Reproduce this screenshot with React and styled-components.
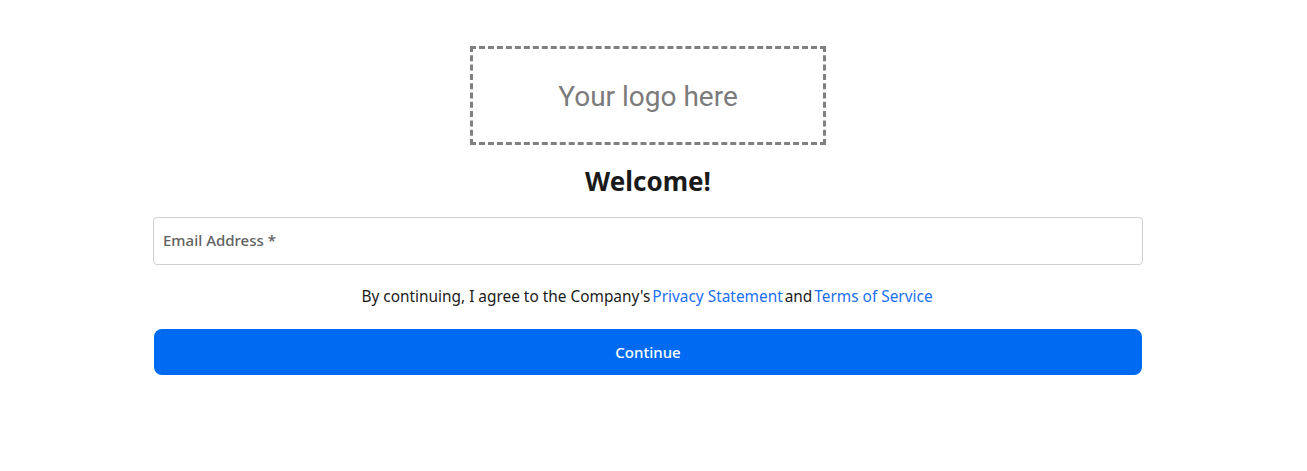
import React from 'react';
import styled, {createGlobalStyle} from 'styled-components';

const GlobalStyle = createGlobalStyle`
  body {
    margin: 0;
    background: #fff;
    font-family: 'Noto Sans', 'Open Sans', sans-serif;
    color: #1a1a1a;
  }
`;

const Page = styled.main`
  display: flex;
  justify-content: center;
  padding: 46px 11px 0 0;
`;

const Card = styled.div`
  width: 990px;
  display: flex;
  flex-direction: column;
  align-items: center;
`;

const LogoBox = styled.div`
  width: 350px;
  height: 91px;
  padding-top: 2px;
  border: 3px dashed #808080;
  display: flex;
  align-items: center;
  justify-content: center;
  font-family: Roboto, sans-serif;
  font-size: 28px;
  color: #7b7b7b;
`;

const Title = styled.h1`
  margin: 18px 0 0;
  font-size: 26px;
  font-weight: 700;
  line-height: 36px;
  color: #1a1a1a;
`;

const Field = styled.label`
  margin-top: 18px;
  box-sizing: border-box;
  width: 990px;
  height: 48px;
  border: 1px solid #cfcfd3;
  border-radius: 4px;
  display: flex;
  align-items: center;
  padding: 0 9px 2px;
`;

const FieldLabel = styled.span`
  font-size: 15px;
  font-weight: 500;
  color: #616161;
`;

const Agreement = styled.p`
  margin: 21px 0 0;
  font-size: 15.4px;
  line-height: 22px;
  color: #1a1a1a;
`;

const Link = styled.a`
  color: #1a6ff0;
  text-decoration: none;
  margin: 0 2px;
`;

const Button = styled.button`
  margin-top: 21px;
  width: 988px;
  height: 46px;
  border: none;
  border-radius: 8px;
  background: #006bf2;
  color: #fff;
  font-family: inherit;
  font-size: 15px;
  font-weight: 500;
  cursor: pointer;
`;

export default function App() {
  return (
    <>
      <GlobalStyle />
      <Page>
        <Card>
          <LogoBox>Your logo here</LogoBox>
          <Title>Welcome!</Title>
          <Field>
            <FieldLabel>Email Address *</FieldLabel>
          </Field>
          <Agreement>
            By continuing, I agree to the Company's
            <Link href="#">Privacy Statement</Link>and
            <Link href="#">Terms of Service</Link>
          </Agreement>
          <Button>Continue</Button>
        </Card>
      </Page>
    </>
  );
}
